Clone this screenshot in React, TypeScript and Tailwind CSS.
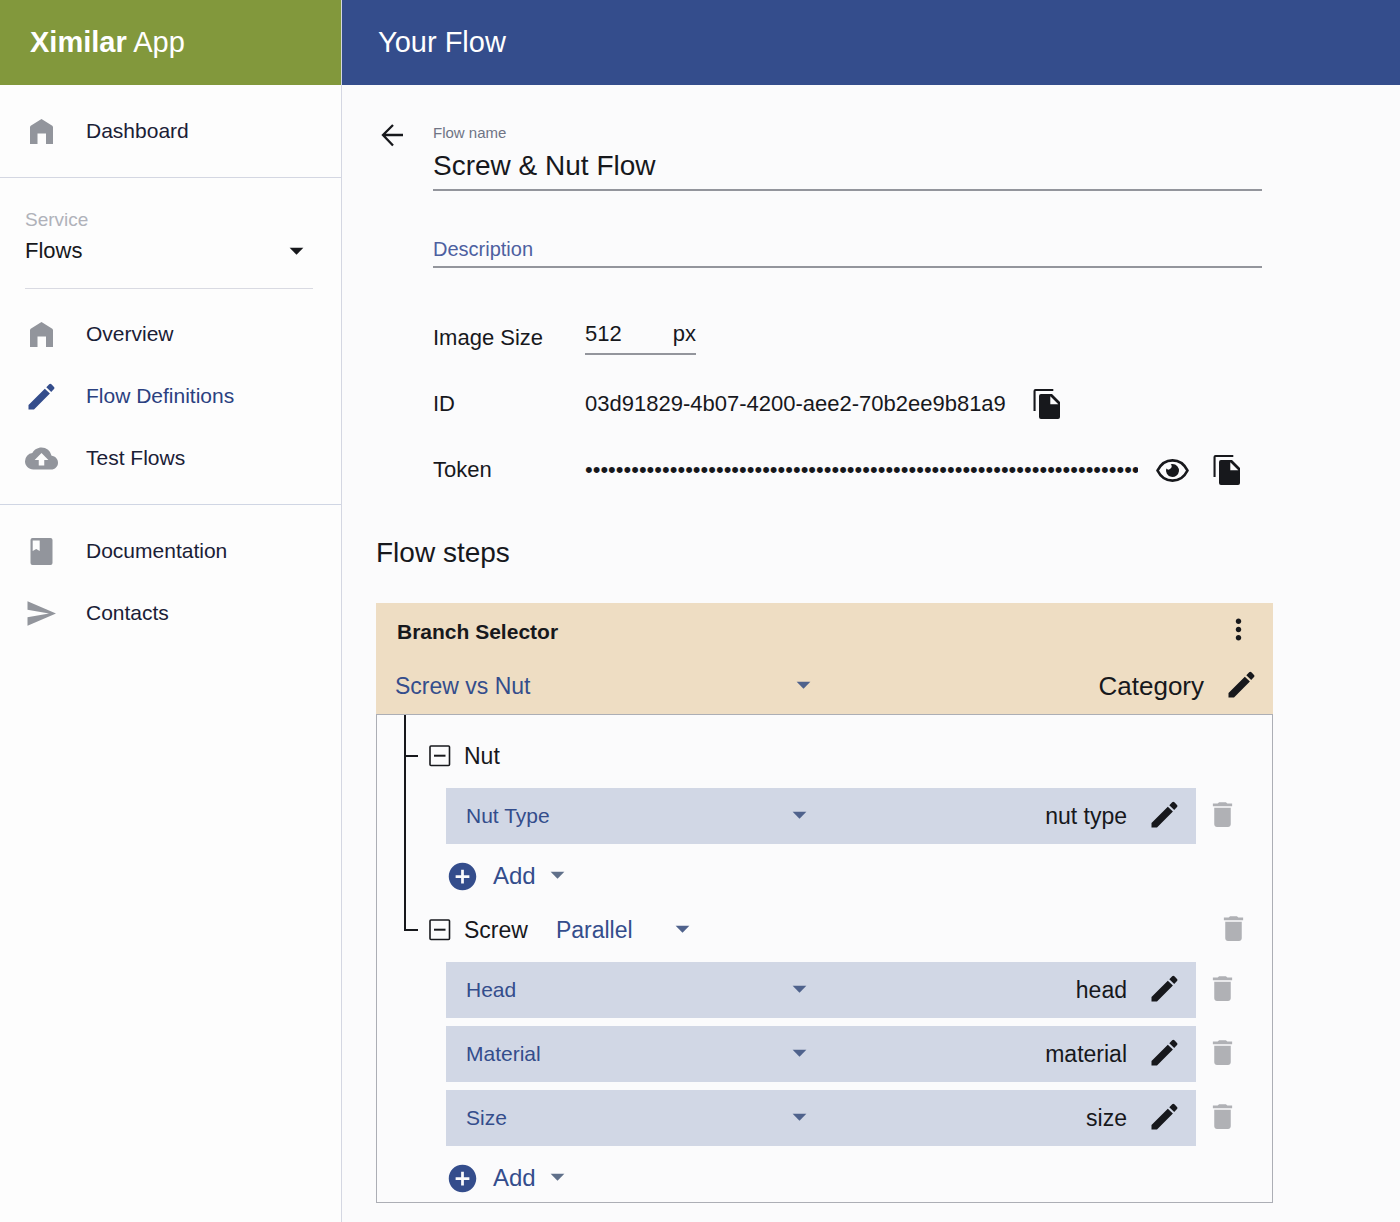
import { useState, type ReactNode } from "react";
import { MdAddCircle, MdArrowDropDown, MdCloudUpload, MdDelete, MdMoreVert } from "react-icons/md";

const ICON = 33;

function Glyph({ d }: { d: string }) {
  return (
    <svg width={ICON} height={ICON} viewBox="0 0 33 33" fill="currentColor" fillRule="evenodd" aria-hidden="true">
      <path d={d} />
    </svg>
  );
}

const HOME = "M16.500 4L27.300 10.800Q28 11.300 28 12.300V29H21V18.500H12.500V29H5V12.300Q5 11.300 5.700 10.800Z";
const PENCIL =
  "M3.500 29.500V25L19.800 8.700L24.900 13.600L9 29.500ZM21.300 7.200L24.200 4.300Q25.300 3.200 26.400 4.300L29 6.900Q30.100 8 29 9.100L26.200 12.100Z";
const BOOK =
  "M7.500 3H25.500Q27.500 3 27.500 5V28Q27.500 30 25.500 30H7.500Q5.500 30 5.500 28V5Q5.500 3 7.500 3ZM7.700 5.500V16L11.200 14L14.700 16V5.500Z";
const SEND = "M2.500 4.200L31 16.500L2.500 28.800V20.300L24 16.500L2.500 12.800Z";
const COPY =
  "M4.500 2H22.300V4.100H4.600V24H2.500V4Q2.500 2 4.500 2ZM10 7H21L29 15V30Q29 32 27 32H10Q8 32 8 30V9Q8 7 10 7ZM19.300 9.300V17.300H27.300Z";

function PencilIcon() {
  return <Glyph d={PENCIL} />;
}

function CopyIcon() {
  return <Glyph d={COPY} />;
}

function BackIcon() {
  return (
    <svg width={ICON} height={ICON} viewBox="0 0 33 33" fill="none" stroke="currentColor" strokeWidth="2.300" aria-hidden="true">
      <path d="M27 17H7.500M17 7L7 17L17 27.500" />
    </svg>
  );
}

function EyeIcon() {
  return (
    <svg width={ICON} height={ICON} viewBox="0 0 33 33" aria-hidden="true">
      <path
        d="M1.500 17.500C5 10.500 10.500 7.300 16.500 7.300S28 10.500 31.500 17.500C28 24.500 22.500 27.700 16.500 27.700S5 24.500 1.500 17.500Z"
        fill="none"
        stroke="currentColor"
        strokeWidth="2.700"
        strokeLinejoin="round"
      />
      <path d="M16.500 11A6.500 6.500 0 1 1 10.300 15.500A2.600 2.600 0 0 0 14.700 11.300Q15.600 11 16.500 11Z" fill="currentColor" />
    </svg>
  );
}

function CollapseIcon() {
  return (
    <svg width="22" height="22" viewBox="0 0 22 22" fill="none" stroke="currentColor" aria-hidden="true">
      <rect x="1" y="1" width="19.500" height="19.500" rx="1" strokeWidth="1.600" />
      <path d="M5 10.700H16.500" strokeWidth="2" />
    </svg>
  );
}

function NavItem({ icon, label, active = false }: { icon: ReactNode; label: string; active?: boolean }) {
  return (
    <a href="#" className={`flex h-[62px] items-center gap-7 pl-[25px] text-[21px] ${active ? "text-[#2b4180]" : "text-[#1a2036]"}`}>
      <span className={active ? "text-[#344d8c]" : "text-[#92959c]"}>{icon}</span>
      {label}
    </a>
  );
}

function Picker({ label, value, className }: { label: string; value: string; className: string }) {
  return (
    <div className={`grid items-center text-[#344d8c] ${className}`}>
      <select aria-label={label} className="col-start-1 row-start-1 h-10 w-full appearance-none bg-transparent outline-none">
        <option>{value}</option>
      </select>
      <MdArrowDropDown size={ICON} className="pointer-events-none col-start-1 row-start-1 mb-1 justify-self-end text-[#4f628c]" />
    </div>
  );
}

function DeleteButton({ label }: { label: string }) {
  return (
    <button type="button" aria-label={label} className="shrink-0 text-[#b0b1b5]">
      <MdDelete size={ICON} />
    </button>
  );
}

function StepRow({ task, name }: { task: string; name: string }) {
  return (
    <div className="flex items-start gap-[10px]">
      <div className="flex h-14 flex-1 items-center bg-[#d1d7e5] pr-[15px] pl-5">
        <Picker label={`${name} task`} value={task} className="w-[350px] text-[21px]" />
        <span className="ml-auto text-[23px]">{name}</span>
        <button type="button" aria-label={`Edit ${name}`} className="mb-[3px] ml-[21px]">
          <PencilIcon />
        </button>
      </div>
      <div className="flex h-[52px] items-center">
        <DeleteButton label={`Delete ${name}`} />
      </div>
    </div>
  );
}

function AddButton() {
  return (
    <button type="button" className="mt-3 flex h-10 items-center text-[24px] text-[#344d8c]">
      <MdAddCircle size={ICON} />
      <span className="ml-[14px]">Add</span>
      <MdArrowDropDown size={ICON} className="mb-1 ml-[5px] text-[#60708a]" />
    </button>
  );
}

type Step = { task: string; name: string };

function Branch({ title, mode, steps, last = false }: { title: string; mode?: string; steps: Step[]; last?: boolean }) {
  return (
    <section className="flex gap-[11px] pr-[22px] pl-[27px]">
      <div className="flex w-[14px] shrink-0 flex-col">
        <div className={`border-b-2 border-l-2 border-[#17181c] ${last ? "h-[35px]" : "h-[42px]"}`} />
        {!last && <div className="flex-1 border-l-2 border-[#17181c]" />}
      </div>
      <div className={`flex-1 ${last ? "pt-[14px]" : "pt-[21px]"}`}>
        <div className="flex h-10 items-center text-[23px]">
          <button type="button" aria-label={`Collapse ${title}`}>
            <CollapseIcon />
          </button>
          <h3 className="ml-[13px]">{title}</h3>
          {mode && (
            <>
              <Picker label="Branch mode" value={mode} className="ml-7 w-[143px]" />
              <div className="mb-1 ml-auto flex">
                <DeleteButton label={`Delete ${title}`} />
              </div>
            </>
          )}
        </div>
        <div className="mt-3 mr-[11px] ml-[17px]">
          <div className="flex flex-col gap-2">
            {steps.map((s) => (
              <StepRow key={s.name} {...s} />
            ))}
          </div>
          <AddButton />
        </div>
      </div>
    </section>
  );
}

export default function App() {
  const [name, setName] = useState("Screw & Nut Flow");
  const [size, setSize] = useState("512");

  return (
    <div className="flex min-h-screen bg-[#fbfbfc] font-['Liberation_Sans',Arial,sans-serif] text-[#17181c]">
      <aside className="w-[342px] shrink-0 border-r border-[#d4d7e2] bg-[#fdfdfd]">
        <div className="flex h-[85px] items-center bg-[#82983c] pl-[30px] text-[29px] text-white">
          <h1>
            <b>Ximilar</b> App
          </h1>
        </div>
        <nav aria-label="Main" className="border-b border-[#d4d7e2] py-[15px]">
          <NavItem icon={<Glyph d={HOME} />} label="Dashboard" />
        </nav>
        <div className="mr-7 ml-[25px] border-b border-[#d9dae2] pt-[30px] pb-5">
          <label htmlFor="service" className="block text-[19px] leading-6 text-[#b0b2ba]">
            Service
          </label>
          <div className="grid items-center">
            <select id="service" className="col-start-1 row-start-1 h-9 w-full appearance-none bg-transparent text-[22px] outline-none">
              <option>Flows</option>
            </select>
            <MdArrowDropDown size={ICON} className="pointer-events-none col-start-1 row-start-1 justify-self-end" />
          </div>
        </div>
        <nav aria-label="Flows" className="border-b border-[#d0d6e4] pt-[14px] pb-[15px]">
          <NavItem icon={<Glyph d={HOME} />} label="Overview" />
          <NavItem icon={<PencilIcon />} label="Flow Definitions" active />
          <NavItem icon={<MdCloudUpload size={ICON} />} label="Test Flows" />
        </nav>
        <nav aria-label="Help" className="py-[15px]">
          <NavItem icon={<Glyph d={BOOK} />} label="Documentation" />
          <NavItem icon={<Glyph d={SEND} />} label="Contacts" />
        </nav>
      </aside>

      <div className="min-w-0 flex-1">
        <header className="flex h-[85px] items-center bg-[#344d8c] pl-9 text-white">
          <h2 className="text-[29px]">Your Flow</h2>
        </header>

        <main className="pt-[33px] pr-[127px] pb-[18px] pl-[34px]">
          <div className="flex items-start gap-6 pr-[11px]">
            <button type="button" aria-label="Back" className="shrink-0">
              <BackIcon />
            </button>
            <form className="min-w-0 flex-1 pt-[5px]">
              <label htmlFor="flow-name" className="block text-[15px] leading-5 text-[#6f7485]">
                Flow name
              </label>
              <input
                id="flow-name"
                value={name}
                onChange={(e) => setName(e.target.value)}
                className="mt-[5px] block h-[43px] w-full border-b-2 border-[#93959c] bg-transparent pb-[5px] text-[28px] outline-none"
              />
              <input
                aria-label="Description"
                placeholder="Description"
                className="mt-[42px] block h-[35px] w-full border-b-2 border-[#93959c] bg-transparent text-[20px] outline-none placeholder:text-[#4d60a0]"
              />
              <div className="mt-[49px] flex flex-col gap-[26px] text-[22px]">
                <div className="flex h-10 items-center">
                  <label htmlFor="image-size" className="w-[152px]">
                    Image Size
                  </label>
                  <div className="flex h-[38px] w-[111px] items-center self-start border-b-2 border-[#93959c] pb-1">
                    <input
                      id="image-size"
                      value={size}
                      onChange={(e) => setSize(e.target.value)}
                      className="min-w-0 flex-1 bg-transparent outline-none"
                    />
                    <span>px</span>
                  </div>
                </div>
                <div className="flex h-10 items-center">
                  <span className="w-[152px]">ID</span>
                  <span className="min-w-[428px]">03d91829-4b07-4200-aee2-70b2ee9b81a9</span>
                  <button type="button" aria-label="Copy ID" className="ml-[18px]">
                    <CopyIcon />
                  </button>
                </div>
                <div className="flex h-10 items-center">
                  <label htmlFor="token" className="w-[152px]">
                    Token
                  </label>
                  <input
                    id="token"
                    type="password"
                    readOnly
                    value={"x".repeat(80)}
                    className="w-[553px] bg-transparent outline-none"
                  />
                  <button type="button" aria-label="Show token" className="ml-[18px]">
                    <EyeIcon />
                  </button>
                  <button type="button" aria-label="Copy token" className="ml-[22px]">
                    <CopyIcon />
                  </button>
                </div>
              </div>
            </form>
          </div>

          <h2 className="mt-11 text-[28px] leading-10">Flow steps</h2>

          <div className="mt-[30px]">
            <div className="bg-[#eeddc3] py-2 pr-[15px] pl-[19px]">
              <div className="flex h-10 items-center justify-between">
                <h3 className="pt-[2px] pl-[2px] text-[21px] font-bold">Branch Selector</h3>
                <button type="button" aria-label="More options" className="mr-[3px] mb-1">
                  <MdMoreVert size={ICON} />
                </button>
              </div>
              <div className="mt-[15px] flex h-10 items-center">
                <Picker label="Branch task" value="Screw vs Nut" className="w-[425px] text-[23px]" />
                <span className="ml-auto text-[26px]">Category</span>
                <button type="button" aria-label="Edit Category" className="mb-[3px] ml-[21px]">
                  <PencilIcon />
                </button>
              </div>
            </div>
            <div className="border border-[#acaeb5] pb-1">
              <Branch title="Nut" steps={[{ task: "Nut Type", name: "nut type" }]} />
              <Branch
                title="Screw"
                mode="Parallel"
                last
                steps={[
                  { task: "Head", name: "head" },
                  { task: "Material", name: "material" },
                  { task: "Size", name: "size" },
                ]}
              />
            </div>
          </div>
        </main>
      </div>
    </div>
  );
}
